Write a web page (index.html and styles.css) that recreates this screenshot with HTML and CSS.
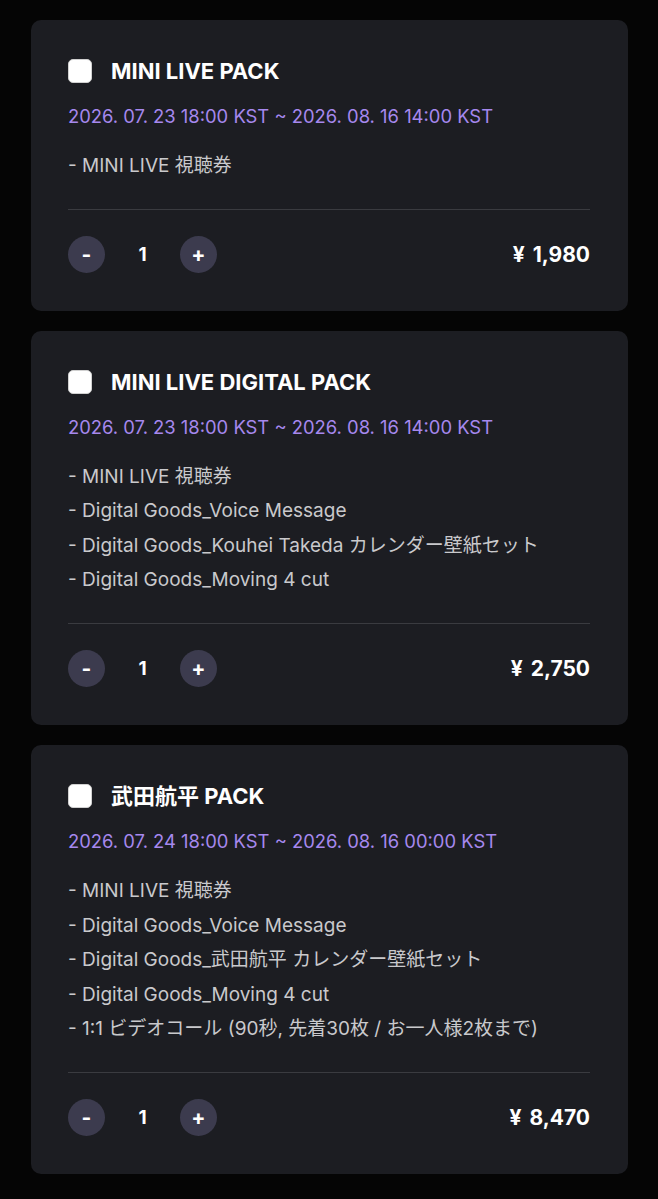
FILE: index.html
```html
<!DOCTYPE html>
<html lang="ja">
  <head>
    <meta charset="UTF-8" />
    <title>Pack Select</title>
    <link rel="stylesheet" href="styles.css">
  </head>
  <body>
    <div class="pack-list">
      <div class="pack-card">
        <label class="pack-head">
          <input type="checkbox" class="pack-check" />
          <span class="pack-title">MINI LIVE PACK</span>
        </label>
        <p class="pack-date">2026. 07. 23 18:00 KST ~ 2026. 08. 16 14:00 KST</p>
        <ul class="pack-items">
          <li>- MINI LIVE 視聴券</li>
        </ul>
        <div class="pack-foot">
          <div class="qty">
            <button class="qty-btn">-</button>
            <span class="qty-num">1</span>
            <button class="qty-btn">+</button>
          </div>
          <span class="pack-price">¥ 1,980</span>
        </div>
      </div>

      <div class="pack-card">
        <label class="pack-head">
          <input type="checkbox" class="pack-check" />
          <span class="pack-title">MINI LIVE DIGITAL PACK</span>
        </label>
        <p class="pack-date">2026. 07. 23 18:00 KST ~ 2026. 08. 16 14:00 KST</p>
        <ul class="pack-items">
          <li>- MINI LIVE 視聴券</li>
          <li>- Digital Goods_Voice Message</li>
          <li>- Digital Goods_Kouhei Takeda カレンダー壁紙セット</li>
          <li>- Digital Goods_Moving 4 cut</li>
        </ul>
        <div class="pack-foot">
          <div class="qty">
            <button class="qty-btn">-</button>
            <span class="qty-num">1</span>
            <button class="qty-btn">+</button>
          </div>
          <span class="pack-price">¥ 2,750</span>
        </div>
      </div>

      <div class="pack-card">
        <label class="pack-head">
          <input type="checkbox" class="pack-check" />
          <span class="pack-title">武田航平 PACK</span>
        </label>
        <p class="pack-date">2026. 07. 24 18:00 KST ~ 2026. 08. 16 00:00 KST</p>
        <ul class="pack-items">
          <li>- MINI LIVE 視聴券</li>
          <li>- Digital Goods_Voice Message</li>
          <li>- Digital Goods_武田航平 カレンダー壁紙セット</li>
          <li>- Digital Goods_Moving 4 cut</li>
          <li>- 1:1 ビデオコール (90秒, 先着30枚 / お一人様2枚まで)</li>
        </ul>
        <div class="pack-foot">
          <div class="qty">
            <button class="qty-btn">-</button>
            <span class="qty-num">1</span>
            <button class="qty-btn">+</button>
          </div>
          <span class="pack-price">¥ 8,470</span>
        </div>
      </div>
    </div>
  </body>
</html>
```

FILE: styles.css
```css
body {
  margin: 0;
  padding: 0;
  background-color: #050505;
  font-family: Inter, "Noto Sans CJK JP", sans-serif;
  color: #ffffff;
}
.pack-list {
  display: flex;
  flex-direction: column;
  gap: 20px;
  padding: 20px 30px 26px 31px;
}
.pack-card {
  background-color: #1c1d22;
  border-radius: 10px;
  padding: 39px 38px 38px 37px;
}
.pack-head {
  display: flex;
  align-items: center;
  gap: 19px;
  height: 24px;
}
.pack-check {
  appearance: none;
  margin: 0;
  width: 24px;
  height: 24px;
  border-radius: 5px;
  background-color: #ffffff;
  border: 1px solid #d0d0d0;
  box-sizing: border-box;
}
.pack-title {
  font-size: 22px;
  font-weight: 700;
  line-height: 24px;
}
.pack-date {
  margin: 21px 0 0;
  font-size: 18.4px;
  line-height: 24px;
  color: #a688ee;
}
.pack-items {
  list-style: none;
  margin: 21px 0 0;
  padding: 0 0 25px;
  border-bottom: 1px solid #3a3b40;
}
.pack-items li {
  font-size: 19px;
  line-height: 34.6px;
  color: #c9c9cc;
}
.pack-foot {
  display: flex;
  align-items: center;
  justify-content: space-between;
  margin-top: 26px;
}
.qty {
  display: flex;
  align-items: center;
}
.qty-btn {
  width: 37px;
  height: 37px;
  border-radius: 50%;
  border: none;
  background-color: #3c3b4e;
  color: #ffffff;
  font-family: Inter, sans-serif;
  font-size: 21px;
  font-weight: 700;
  padding: 0;
}
.qty-num {
  width: 75px;
  text-align: center;
  font-size: 19px;
  font-weight: 700;
}
.pack-price {
  font-size: 21px;
  font-weight: 700;
  word-spacing: 3px;
}
```
